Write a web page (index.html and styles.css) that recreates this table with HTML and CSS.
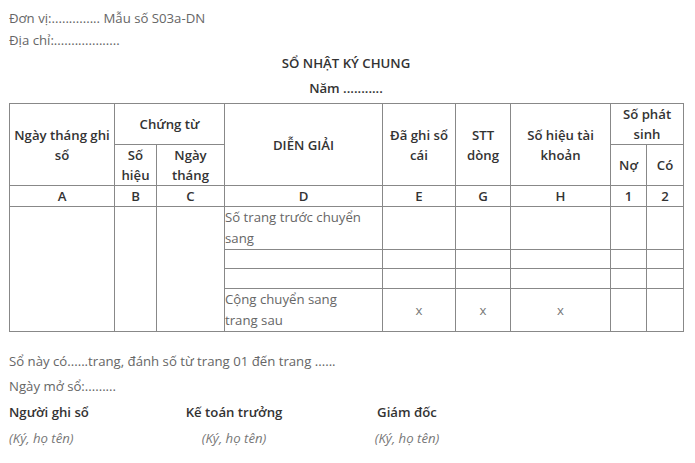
FILE: index.html
```html
<!DOCTYPE html>
<html lang="vi">
<head>
<meta charset="utf-8">
<title>Sổ nhật ký chung</title>
<link rel="stylesheet" href="styles.css">
</head>
<body>
<div class="page">
  <div class="head-info">
    <div>Đơn vị:.............. Mẫu số S03a-DN</div>
    <div>Địa chỉ:...................</div>
  </div>
  <div class="title">SỔ NHẬT KÝ CHUNG</div>
  <div class="year">Năm ...........</div>
  <table class="ledger">
    <colgroup>
      <col class="c-a"><col class="c-b"><col class="c-c"><col class="c-d"><col class="c-e"><col class="c-g"><col class="c-h"><col class="c-1"><col class="c-2">
    </colgroup>
    <tr class="r-h1">
      <th rowspan="2">Ngày tháng ghi sổ</th>
      <th colspan="2">Chứng từ</th>
      <th rowspan="2">DIỄN GIẢI</th>
      <th rowspan="2">Đã ghi sổ cái</th>
      <th rowspan="2">STT dòng</th>
      <th rowspan="2">Số hiệu tài khoản</th>
      <th colspan="2">Số phát sinh</th>
    </tr>
    <tr class="r-h2">
      <th>Số hiệu</th>
      <th>Ngày tháng</th>
      <th>Nợ</th>
      <th>Có</th>
    </tr>
    <tr class="r-letters">
      <th>A</th><th>B</th><th>C</th><th>D</th><th>E</th><th>G</th><th>H</th><th>1</th><th>2</th>
    </tr>
    <tr class="r-d1">
      <td rowspan="4"></td><td rowspan="4"></td><td rowspan="4"></td>
      <td class="desc">Số trang trước chuyển sang</td>
      <td></td><td></td><td></td><td></td><td></td>
    </tr>
    <tr class="r-d2"><td></td><td></td><td></td><td></td><td></td><td></td></tr>
    <tr class="r-d3"><td></td><td></td><td></td><td></td><td></td><td></td></tr>
    <tr class="r-d4">
      <td class="desc">Cộng chuyển sang trang sau</td>
      <td class="mark">x</td><td class="mark">x</td><td class="mark">x</td><td></td><td></td>
    </tr>
  </table>
  <div class="foot-info">
    <div>Sổ này có......trang, đánh số từ trang 01 đến trang ......</div>
    <div>Ngày mở sổ:.........</div>
  </div>
  <div class="signs">
    <div class="sign sign-left">
      <div class="sign-title">Người ghi sổ</div>
      <div class="sign-note">(Ký, họ tên)</div>
    </div>
    <div class="sign">
      <div class="sign-title">Kế toán trưởng</div>
      <div class="sign-note">(Ký, họ tên)</div>
    </div>
    <div class="sign">
      <div class="sign-title">Giám đốc</div>
      <div class="sign-note">(Ký, họ tên)</div>
    </div>
  </div>
</div>
</body>
</html>
```
FILE: styles.css
```css
html, body {
  margin: 0;
  padding: 0;
  background: #fff;
}
body {
  font-family: "Open Sans", "Noto Sans", sans-serif;
  font-size: 13.2px;
  color: #666;
}
.page {
  padding: 7px 12px 0 9px;
}
.head-info {
  line-height: 22px;
}
.title, .year {
  text-align: center;
  font-weight: 600;
  color: #333;
  line-height: 25px;
}
.year {
  margin-bottom: 2px;
}
.ledger {
  width: 674px;
  border-collapse: collapse;
  border: 1px solid #333;
  table-layout: fixed;
  line-height: 20px;
}
.ledger th, .ledger td {
  border: 1px solid #888;
  padding: 0;
}
.ledger th {
  font-weight: 600;
  color: #333;
  text-align: center;
  vertical-align: middle;
}
.ledger td {
  vertical-align: top;
  text-align: left;
}
.ledger td.desc {
  padding-right: 10px;
  line-height: 21px;
}
.c-a { width: 105px; }
.c-b { width: 42px; }
.c-c { width: 68px; }
.c-d { width: 158px; }
.c-e { width: 73px; }
.c-g { width: 55px; }
.c-h { width: 100px; }
.c-1 { width: 36px; }
.c-2 { width: 37px; }
.r-h1 { height: 40px; }
.r-h2 { height: 40px; }
.r-letters { height: 20px; }
.r-d1 { height: 41px; }
.r-d2 { height: 19px; }
.r-d3 { height: 20px; }
.r-d4 { height: 39px; }
.ledger td.mark {
  text-align: center;
  vertical-align: middle;
  color: #777;
}
.foot-info {
  margin-top: 17px;
  line-height: 25px;
}
.signs {
  display: grid;
  grid-template-columns: 157px 136px 210px;
  line-height: 26px;
}
.sign {
  text-align: center;
}
.sign-left {
  text-align: left;
}
.sign-title {
  font-weight: 600;
  color: #333;
}
.sign-note {
  font-style: italic;
  color: #777;
}
```
